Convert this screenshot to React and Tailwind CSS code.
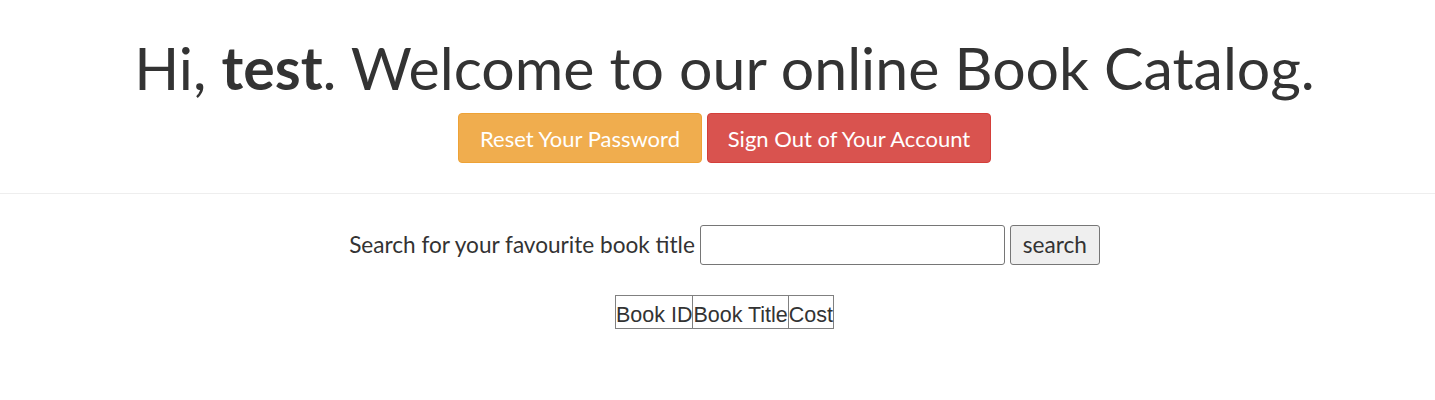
export default function App() {
  return (
    <div className="w-full bg-white text-[#333333] pl-[14px]" style={{ fontFamily: '"Source Sans Pro", Lato, sans-serif' }}>
      <div className="flex flex-col items-center pt-[37px]">
        <h1 className="text-[59px] leading-[62px] font-normal">
          Hi, <b className="font-bold">test</b>. Welcome to our online Book Catalog.
        </h1>
        <div className="flex gap-[5px] mt-[14px]">
          <a className="h-[50px] w-[244px] flex items-center justify-center rounded-[4px] border border-[#eea236] bg-[#f0ad4e] text-white text-[22px]">
            Reset Your Password
          </a>
          <a className="h-[50px] w-[284px] flex items-center justify-center rounded-[4px] border border-[#d43f3a] bg-[#d9534f] text-white text-[22px]">
            Sign Out of Your Account
          </a>
        </div>
      </div>
      <hr className="mt-[30px] -ml-[14px] border-t border-[#eeeeee]" />
      <div className="flex justify-center items-center mt-[31px] text-[22.6px]">
        <span className="mr-[5px]">Search for your favourite book title</span>
        <input className="w-[305px] h-[40px] border border-[#767676] rounded-[3px]" />
        <button className="ml-[5px] h-[40px] w-[90px] border border-[#767676] rounded-[3px] bg-[#efefef]">search</button>
      </div>
      <div className="flex justify-center mt-[30px]">
        <table className="border-collapse text-[21.5px]" style={{ fontFamily: '"Liberation Sans", Arial, sans-serif' }}>
          <thead>
            <tr>
              <th className="font-normal border border-[#808080] h-[33px] p-0 pt-[7px] leading-none">Book ID</th>
              <th className="font-normal border border-[#808080] h-[33px] p-0 pt-[7px] leading-none">Book Title</th>
              <th className="font-normal border border-[#808080] h-[33px] p-0 pt-[7px] leading-none">Cost</th>
            </tr>
          </thead>
        </table>
      </div>
      <div className="h-[72px]" />
    </div>
  );
}
